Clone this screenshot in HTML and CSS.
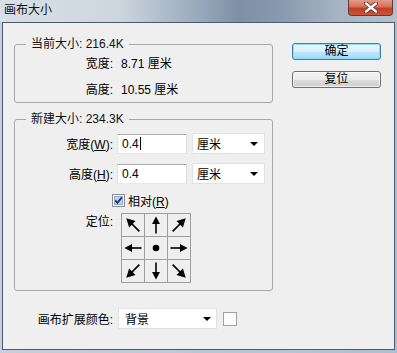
FILE: index.html
```html
<!DOCTYPE html>
<html lang="zh">
<head>
<meta charset="utf-8">
<title>画布大小</title>
<link rel="stylesheet" href="styles.css">
</head>
<body>
<div class="window">
  <div class="titlebar">
    <span class="title">画布大小</span>
    <div class="close">
      <svg width="14" height="11" viewBox="0 0 14 11"><path d="M2 1.5 L12 9.5 M12 1.5 L2 9.5" stroke="#5b2a22" stroke-width="4" stroke-linecap="round"/><path d="M2 1.5 L12 9.5 M12 1.5 L2 9.5" stroke="#ffffff" stroke-width="2.4" stroke-linecap="round"/></svg>
    </div>
  </div>
  <div class="client">
    <div class="main">
      <fieldset class="group g1">
        <legend>当前大小: 216.4K</legend>
        <div class="info">
          <span class="lbl">宽度:</span><span>8.71 厘米</span>
          <span class="lbl">高度:</span><span>10.55 厘米</span>
        </div>
      </fieldset>
      <fieldset class="group g2">
        <legend>新建大小: 234.3K</legend>
        <div class="field-row first">
          <span class="lbl">宽度(<u>W</u>):</span>
          <div class="textbox">0.4<span class="caret"></span></div>
          <div class="select unit"><span>厘米</span><span class="arrow"></span></div>
        </div>
        <div class="field-row second">
          <span class="lbl">高度(<u>H</u>):</span>
          <div class="textbox">0.4</div>
          <div class="select unit"><span>厘米</span><span class="arrow"></span></div>
        </div>
        <div class="check-row">
          <span class="checkbox">
            <svg width="13" height="13" viewBox="0 0 13 13"><rect x="0.5" y="0.5" width="12" height="12" fill="#f4f4f4" stroke="#8e8f8f"/><rect x="2.5" y="2.5" width="8" height="8" fill="#bcd3ec" stroke="#93b0d2"/><path d="M3.2 6.4 L5.4 8.8 L9.8 3.4" fill="none" stroke="#21306b" stroke-width="1.8"/></svg>
          </span>
          <span>相对(<u>R</u>)</span>
        </div>
        <div class="anchor-row">
          <span class="lbl">定位:</span>
          <div class="anchor-grid">
            <div class="cell"><svg width="22" height="22" viewBox="0 0 22 22"><g transform="rotate(225 11 11)"><path d="M2 11 H14" stroke="#000" stroke-width="1.6"/><path d="M20.5 11 L12 6.5 L12 15.5 Z" fill="#000"/></g></svg></div>
            <div class="cell"><svg width="22" height="22" viewBox="0 0 22 22"><g transform="rotate(270 11 11)"><path d="M2.5 11 H14" stroke="#000" stroke-width="1.6"/><path d="M19.5 11 L12 7 L12 15 Z" fill="#000"/></g></svg></div>
            <div class="cell"><svg width="22" height="22" viewBox="0 0 22 22"><g transform="rotate(315 11 11)"><path d="M2 11 H14" stroke="#000" stroke-width="1.6"/><path d="M20.5 11 L12 6.5 L12 15.5 Z" fill="#000"/></g></svg></div>
            <div class="cell"><svg width="22" height="22" viewBox="0 0 22 22"><g transform="rotate(180 11 11)"><path d="M2.5 11 H14" stroke="#000" stroke-width="1.6"/><path d="M19.5 11 L12 7 L12 15 Z" fill="#000"/></g></svg></div>
            <div class="cell"><svg width="22" height="22" viewBox="0 0 22 22"><circle cx="11" cy="11" r="3.3" fill="#000"/></svg></div>
            <div class="cell"><svg width="22" height="22" viewBox="0 0 22 22"><g><path d="M2.5 11 H14" stroke="#000" stroke-width="1.6"/><path d="M19.5 11 L12 7 L12 15 Z" fill="#000"/></g></svg></div>
            <div class="cell"><svg width="22" height="22" viewBox="0 0 22 22"><g transform="rotate(135 11 11)"><path d="M2 11 H14" stroke="#000" stroke-width="1.6"/><path d="M20.5 11 L12 6.5 L12 15.5 Z" fill="#000"/></g></svg></div>
            <div class="cell"><svg width="22" height="22" viewBox="0 0 22 22"><g transform="rotate(90 11 11)"><path d="M2.5 11 H14" stroke="#000" stroke-width="1.6"/><path d="M19.5 11 L12 7 L12 15 Z" fill="#000"/></g></svg></div>
            <div class="cell"><svg width="22" height="22" viewBox="0 0 22 22"><g transform="rotate(45 11 11)"><path d="M2 11 H14" stroke="#000" stroke-width="1.6"/><path d="M20.5 11 L12 6.5 L12 15.5 Z" fill="#000"/></g></svg></div>
          </div>
        </div>
      </fieldset>
      <div class="ext-row">
        <span class="lbl">画布扩展颜色:</span>
        <div class="select ext"><span>背景</span><span class="arrow"></span></div>
        <span class="swatch"></span>
      </div>
    </div>
    <div class="buttons">
      <div class="btn default">确定</div>
      <div class="btn">复位</div>
    </div>
  </div>
</div>
</body>
</html>
```
FILE: styles.css
```css
* { box-sizing: border-box; }
html, body { margin: 0; padding: 0; }
body {
  width: 397px;
  height: 353px;
  overflow: hidden;
  background: linear-gradient(90deg, #c6d0db 0%, #b0bfcf 100%);
  font-family: "Liberation Sans", "Noto Sans CJK SC", sans-serif;
  font-size: 12px;
  color: #000;
}
.window {
  height: 353px;
  display: flex;
  flex-direction: column;
}
.titlebar {
  height: 22px;
  flex: none;
  display: flex;
  align-items: flex-start;
  background: linear-gradient(90deg, #d8dfe6 0%, #cdd6df 30%, #98a9bb 50%, #7d91a7 60%, #8799ae 70%, #a6b4c3 85%, #b4c0cc 100%);
}
.title {
  padding-left: 4px;
  line-height: 20px;
  font-size: 12px;
  color: #111;
}
.close {
  margin-left: auto;
  margin-right: 4px;
  width: 45px;
  height: 16px;
  border: 1px solid #5f3a36;
  border-top: none;
  border-radius: 0 0 4px 4px;
  background: linear-gradient(#e39a88 0%, #d66f55 45%, #c23f26 55%, #c9553a 100%);
  display: flex;
  align-items: center;
  justify-content: center;
}
.client {
  flex: 1;
  margin: 0 2px 3px 2px;
  border: 1px solid #4c5b6c;
  background: #efefef;
  display: flex;
}
.main {
  width: 270px;
  flex: none;
  padding: 13px 0 0 11px;
}
.group {
  margin: 0;
  border: 1px solid #a8a8a8;
  border-radius: 3px;
  padding: 0 0 4px 11px;
  min-width: 0;
}
.group legend {
  padding: 0 5px;
  line-height: 16px;
  font-size: 12px;
  color: #111;
}
.lbl { text-align: right; }
.info {
  display: grid;
  grid-template-columns: 87px auto;
  column-gap: 8px;
  row-gap: 10px;
  padding-top: 4px;
  line-height: 16px;
}
.g2 { margin-top: 8px; padding-bottom: 7px; }
.field-row {
  display: flex;
  align-items: center;
  height: 21px;
}
.field-row.first { margin-top: 6px; }
.field-row.second { margin-top: 9px; }
.field-row .lbl { width: 87px; }
.textbox {
  margin-left: 4px;
  width: 70px;
  height: 20px;
  background: #fff;
  border: 1px solid;
  border-color: #abadb3 #dbdfe6 #e3e9ef #e2e3ea;
  padding-left: 4px;
  line-height: 18px;
  display: flex;
  align-items: center;
}
.caret {
  display: inline-block;
  width: 1px;
  height: 13px;
  background: #000;
  margin-left: 1px;
}
.select {
  height: 21px;
  background: #fff;
  border: 1px solid #e2e2e2;
  display: flex;
  align-items: center;
  justify-content: space-between;
  padding: 0 6px 0 4px;
}
.select.unit { margin-left: 5px; width: 73px; }
.arrow {
  width: 0;
  height: 0;
  border-left: 4px solid transparent;
  border-right: 4px solid transparent;
  border-top: 4px solid #000;
}
.check-row {
  margin-top: 8px;
  height: 16px;
  display: flex;
  align-items: center;
  gap: 3px;
  padding-left: 86px;
}
.checkbox { display: flex; width: 13px; height: 13px; }
.anchor-row {
  margin-top: 5px;
  display: flex;
  align-items: flex-start;
}
.anchor-row .lbl {
  width: 87px;
  line-height: 16px;
  margin-top: 1px;
}
.anchor-grid {
  margin-left: 8px;
  display: grid;
  grid-template-columns: repeat(3, 22px);
  grid-auto-rows: 22px;
  gap: 1px;
  border: 1px solid #9e9e9e;
  background: #9e9e9e;
}
.cell { background: #efefef; display: flex; }
.ext-row {
  margin-top: 17px;
  display: flex;
  align-items: center;
  height: 21px;
}
.ext-row .lbl { width: 99px; }
.select.ext { margin-left: 5px; width: 99px; padding-left: 6px; padding-right: 5px; }
.swatch {
  margin-left: 6px;
  width: 14px;
  height: 14px;
  border: 1px solid #a0a0a0;
  background: #fbfbfb;
}
.buttons {
  margin-left: 19px;
  padding-top: 20px;
  display: flex;
  flex-direction: column;
  gap: 11px;
}
.btn {
  width: 89px;
  height: 17px;
  border: 1px solid #707070;
  border-radius: 3px;
  background: linear-gradient(#f3f3f3 0%, #ebebeb 50%, #dddddd 51%, #cfcfcf 100%);
  box-shadow: inset 0 0 0 1px rgba(255,255,255,0.7);
  text-align: center;
  line-height: 15px;
  font-size: 12px;
}
.btn.default {
  border-color: #3c7fb1;
  background: linear-gradient(#eaf6fd 0%, #d9f0fc 50%, #bee6fd 51%, #a7d9f5 100%);
  box-shadow: inset 0 0 0 1px rgba(120,220,250,0.8);
}
```
